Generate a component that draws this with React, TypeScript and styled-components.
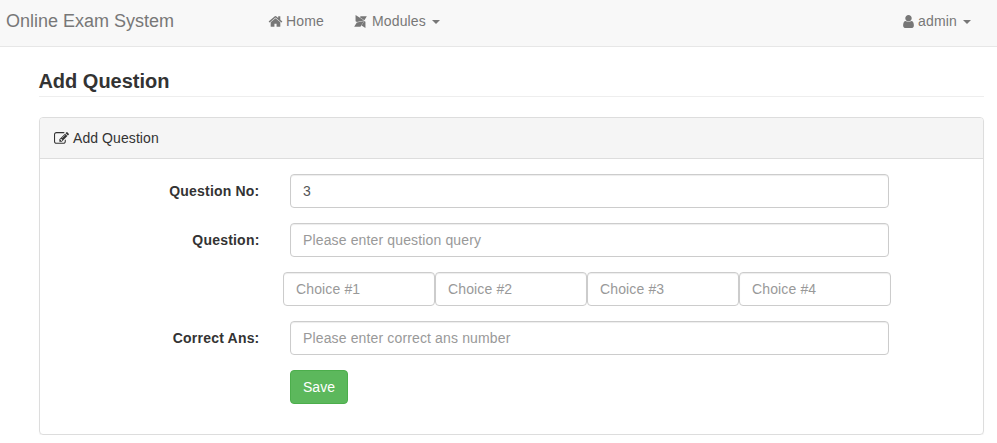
import React from "react";
import styled, { createGlobalStyle, css } from "styled-components";
import { FaModx } from "react-icons/fa";

const GlobalStyle = createGlobalStyle`
  *, *::before, *::after { box-sizing: border-box; }
  body {
    margin: 0;
    background: #fff;
    color: #333;
    font: 14px/20px "Liberation Sans", Arial, sans-serif;
    overflow: hidden;
  }
`;

const Navbar = styled.nav`
  display: flex;
  align-items: center;
  height: 47px;
  padding: 0 26px 4px 6px;
  background: #f8f8f8;
  border-bottom: 1px solid #e7e7e7;
  color: #777;
`;

const Brand = styled.a`
  width: 262px;
  font-size: 18px;
`;

const NavItem = styled.a<{ $end?: boolean }>`
  display: flex;
  align-items: center;
  margin-right: ${(p) => (p.$end ? 0 : 29)}px;
  margin-left: ${(p) => (p.$end ? "auto" : 0)};
  letter-spacing: 0.15px;
`;

const Icon = styled.svg<{ $width: number }>`
  flex: none;
  width: 15px;
  height: 15px;
  margin-right: ${(p) => p.$width - 11}px;
  fill: currentColor;
`;

const ModxIcon = styled(FaModx)`
  width: 15px;
  height: 15px;
  margin-right: 4px;
`;

const Caret = styled.span`
  margin: 2px 0 0 6px;
  border-top: 4px solid currentColor;
  border-right: 4px solid transparent;
  border-left: 4px solid transparent;
`;

const Content = styled.main`
  padding: 22px 13px 0 39px;
`;

const Title = styled.h1`
  height: 28px;
  margin: 0 0 20px;
  border-bottom: 1px solid #eee;
  font-size: 20px;
  line-height: 24px;
  font-weight: bold;
  text-indent: -0.6px;
`;

const Panel = styled.section`
  height: 318px;
  border: 1px solid #ddd;
  border-radius: 4px;
  box-shadow: 0 1px 1px rgba(0, 0, 0, 0.05);
`;

const PanelHeading = styled.header`
  display: flex;
  align-items: center;
  height: 41px;
  padding: 0 14px;
  background: #f5f5f5;
  border-bottom: 1px solid #ddd;
  border-radius: 3px 3px 0 0;
  letter-spacing: 0.08px;
`;

const Form = styled.form`
  display: grid;
  gap: 15px;
  padding-top: 15px;
`;

const Row = styled.div`
  display: grid;
  grid-template-columns: 219.5px 599px;
  column-gap: 30.5px;
`;

const Label = styled.label`
  padding-top: 7px;
  text-align: right;
  font-weight: bold;
  letter-spacing: 0.2px;
`;

const control = css`
  height: 34px;
  padding: 6px 12px;
  border-radius: 4px;
  font: inherit;
`;

const Input = styled.input`
  ${control}
  width: 100%;
  min-width: 0;
  border: 1px solid #ccc;
  background: #fff;
  color: #555;
  letter-spacing: 0.14px;
  box-shadow: inset 0 1px 1px rgba(0, 0, 0, 0.075);
  outline: none;
  &::placeholder { color: #999; opacity: 1; }
`;

const Choices = styled.div`
  display: grid;
  grid-template-columns: repeat(4, 152px);
  margin-left: 243px;
`;

const SaveButton = styled.button`
  ${control}
  justify-self: start;
  width: 58px;
  margin-left: 250px;
  border: 1px solid #4cae4c;
  background: #5cb85c;
  color: #fff;
`;

const paths = {
  home: "M1472 992v480q0 26-19 45t-45 19h-384v-384h-256v384h-384q-26 0-45-19t-19-45v-480q0-1 .5-3t.5-3l575-474 575 474q1 2 1 6zm223-69l-62 74q-8 9-21 11h-3q-13 0-21-7l-692-577-692 577q-12 8-24 7-13-2-21-11l-62-74q-8-10-7-23.5t11-21.5l719-599q32-26 76-26t76 26l244 204v-195q0-14 9-23t23-9h192q14 0 23 9t9 23v408l219 182q10 8 11 21.5t-7 23.5z",
  user: "M1536 1399q0 109-62.5 187t-150.5 78h-854q-88 0-150.5-78t-62.5-187q0-85 8.5-160.5t31.5-152 58.5-131 94-89 134.5-34.5q131 128 313 128t313-128q76 0 134.5 34.5t94 89 58.5 131 31.5 152 8.5 160.5zm-256-887q0 159-112.5 271.5t-271.5 112.5-271.5-112.5-112.5-271.5 112.5-271.5 271.5-112.5 271.5 112.5 112.5 271.5z",
  edit: "M888 1184l116-116-152-152-116 116v56h96v96h56zm440-720q-16-16-33 1l-350 350q-17 17-1 33t33-1l350-350q17-17 1-33zm80 594v190q0 119-84.5 203.5t-203.5 84.5h-832q-119 0-203.5-84.5t-84.5-203.5v-832q0-119 84.5-203.5t203.5-84.5h832q63 0 117 25 15 7 18 23 3 17-9 29l-49 49q-14 14-32 8-23-6-45-6h-832q-66 0-113 47t-47 113v832q0 66 47 113t113 47h832q66 0 113-47t47-113v-126q0-13 9-22l64-64q15-15 35-7t20 29zm-96-738l288 288-672 672h-288v-288zm444 132l-92 92-288-288 92-92q28-28 68-28t68 28l152 152q28 28 28 68t-28 68z",
};

function Glyph({ name, width = 14 }: { name: keyof typeof paths; width?: number }) {
  return (
    <Icon $width={width} viewBox="0 0 1792 1792" aria-hidden="true">
      <path d={paths[name]} />
    </Icon>
  );
}

function Field({ id, label, value, placeholder }: { id: string; label: string; value?: string; placeholder?: string }) {
  return (
    <Row>
      <Label htmlFor={id}>{label}</Label>
      <Input id={id} defaultValue={value} placeholder={placeholder} />
    </Row>
  );
}

export default function App() {
  return (
    <>
      <GlobalStyle />
      <Navbar>
        <Brand>Online Exam System</Brand>
        <NavItem><Glyph name="home" />Home</NavItem>
        <NavItem><ModxIcon />Modules<Caret /></NavItem>
        <NavItem $end><Glyph name="user" width={13} />admin<Caret /></NavItem>
      </Navbar>
      <Content>
        <Title>Add Question</Title>
        <Panel>
          <PanelHeading><Glyph name="edit" width={15} />Add Question</PanelHeading>
          <Form>
            <Field id="number" label="Question No:" value="3" />
            <Field id="question" label="Question:" placeholder="Please enter question query" />
            <Choices>
              {[1, 2, 3, 4].map((n) => (
                <Input key={n} aria-label={`Choice ${n}`} placeholder={`Choice #${n}`} />
              ))}
            </Choices>
            <Field id="answer" label="Correct Ans:" placeholder="Please enter correct ans number" />
            <SaveButton type="button">Save</SaveButton>
          </Form>
        </Panel>
      </Content>
    </>
  );
}
